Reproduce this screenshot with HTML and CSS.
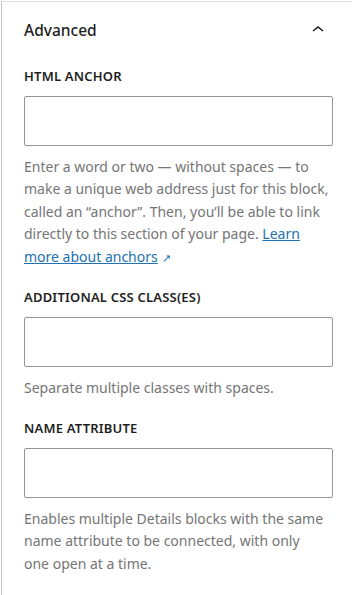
FILE: index.html
```html
<!DOCTYPE html>
<html lang="en">
<head>
    <meta charset="UTF-8">
    <meta name="viewport" content="width=device-width, initial-scale=1.0">
    <title>Advanced settings</title>
    <link rel="stylesheet" href="styles.css">
</head>
<body>
    <div class="panel">
        <div class="panel-header">
            <h2>Advanced</h2>
            <svg class="chevron" viewBox="0 0 24 24" width="24" height="24" aria-hidden="true">
                <path d="M6.5 12.4L12 8l5.5 4.4-.9 1.2L12 10l-4.6 3.6-.9-1.2z"></path>
            </svg>
        </div>

        <div class="field">
            <label for="anchor">HTML anchor</label>
            <input type="text" id="anchor">
            <p class="help">Enter a word or two — without spaces — to make a unique web address just for this block, called an “anchor”. Then, you’ll be able to link directly to this section of your page. <a href="#">Learn more about anchors</a><span class="ext">↗</span></p>
        </div>

        <div class="field">
            <label for="css-class">Additional CSS class(es)</label>
            <input type="text" id="css-class">
            <p class="help">Separate multiple classes with spaces.</p>
        </div>

        <div class="field">
            <label for="name-attr">Name attribute</label>
            <input type="text" id="name-attr">
            <p class="help">Enables multiple Details blocks with the same name attribute to be connected, with only one&nbsp;open at a time.</p>
        </div>
    </div>
</body>
</html>
```

FILE: styles.css
```css
* {
    margin: 0;
    padding: 0;
    box-sizing: border-box;
}

body {
    font-family: 'Noto Sans', sans-serif;
    background: #fff;
    color: #1e1e1e;
}

.panel {
    margin: 1px 0 0 1px;
    min-height: 594px;
    border-top: 1px solid #e0e0e0;
    border-left: 1px solid #c8c8c8;
    padding: 0 19px 0 22px;
}

.panel-header {
    display: flex;
    align-items: center;
    justify-content: space-between;
    padding: 16px 0;
}

.panel-header h2 {
    font-size: 15.5px;
    font-weight: 500;
    line-height: 24px;
}

.chevron {
    margin-right: 3px;
    fill: #1e1e1e;
}

.field {
    margin-top: 10px;
}

.field + .field {
    margin-top: 21px;
}

.field label {
    display: block;
    font-size: 13px;
    font-weight: 600;
    letter-spacing: 0.2px;
    line-height: 16px;
    text-transform: uppercase;
}

.field input {
    display: block;
    width: 100%;
    height: 50px;
    margin-top: 12px;
    border: 1px solid #949494;
    border-radius: 2px;
    background: #fff;
}

.help {
    margin-top: 9.5px;
    font-size: 14px;
    line-height: 22.5px;
    color: #757575;
}

.help a {
    color: #2271b1;
}

.ext {
    display: inline-block;
    margin-left: 4px;
    font-size: 11px;
    line-height: 1;
    color: #2271b1;
}
```
